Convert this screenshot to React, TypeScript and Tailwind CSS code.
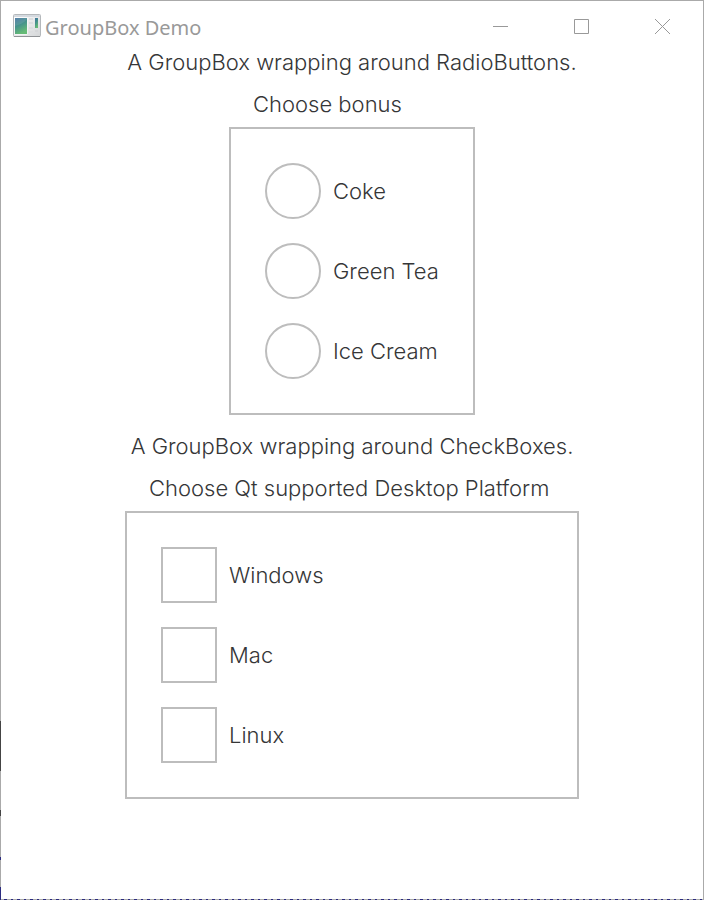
import type { ReactNode } from "react";

const beverages = ["Coke", "Green Tea", "Ice Cream"];
const platforms = ["Windows", "Mac", "Linux"];

function AppIcon() {
  return (
    <svg className="shrink-0" width="28" height="24" viewBox="0 0 28 24" aria-hidden="true">
      <defs>
        <linearGradient id="pane" x1="0" y1="0" x2="0.4" y2="1">
          <stop offset="0" stopColor="#41709f" />
          <stop offset="0.5" stopColor="#45928c" />
          <stop offset="1" stopColor="#66bb76" />
        </linearGradient>
        <linearGradient id="shell" x1="0" y1="0" x2="1" y2="1">
          <stop offset="0" stopColor="#ffffff" />
          <stop offset="1" stopColor="#d4d6d8" />
        </linearGradient>
      </defs>
      <rect x="0.5" y="0.5" width="27" height="22" rx="1" fill="url(#shell)" stroke="#b4b8bb" />
      <path d="M1 22.5h26" stroke="#909396" />
      <path d="M1 2h26" stroke="#d5dae0" strokeWidth="2" />
      <rect x="1.5" y="3.5" width="13" height="17" fill="#fff" />
      <rect x="2" y="4" width="12" height="16" fill="url(#pane)" />
      <path d="M2 12C6 11 11 9 14 5V4H2Z" fill="#fff" opacity="0.1" />
      <path d="M16 5h4M16 9h4M16 14h4M16 18h4" stroke="#dcdee0" strokeWidth="2" />
      <rect x="22" y="4" width="3" height="10" fill="url(#pane)" />
      <path d="M22 17h3" stroke="#d5d7d9" strokeWidth="2" />
    </svg>
  );
}

function WindowButton({ label, children }: { label: string; children: ReactNode }) {
  return (
    <button type="button" aria-label={label} className="flex h-[50px] w-[81px] items-center justify-center">
      <svg width="15" height="15" viewBox="0 0 15 15" fill="none" stroke="#999999" aria-hidden="true">
        {children}
      </svg>
    </button>
  );
}

function GroupBox({ title, width, children }: { title: string; width: string; children: ReactNode }) {
  return (
    <fieldset className={`mt-3.5 max-w-full ${width}`}>
      <legend className="px-6 whitespace-nowrap">{title}</legend>
      <div className="mt-[9px] flex flex-col gap-6 border-2 border-[#bdbdbd] p-[34px]">{children}</div>
    </fieldset>
  );
}

function Option({ type, name, label }: { type: "radio" | "checkbox"; name: string; label: string }) {
  const shape = type === "radio" ? "rounded-full checked:bg-[radial-gradient(#353637_50%,transparent_52%)]" : "checked:bg-[#353637] checked:bg-clip-content checked:p-3";
  return (
    <label className="flex items-center gap-3 whitespace-nowrap">
      <input type={type} name={name} className={`size-14 shrink-0 appearance-none border-2 border-[#bdbdbd] bg-white ${shape}`} />
      {label}
    </label>
  );
}

export default function App() {
  return (
    <div className="flex min-h-screen bg-[#aaaaaa] bg-[linear-gradient(to_bottom,transparent_721px,#444444_721px,#444444_771px,transparent_771px,transparent_810px,#444444_810px,#444444_816px,transparent_816px,transparent_857px,#2b2b80_857px,#2b2b80_860px,transparent_860px,transparent_887px,#2b2b80_887px),repeating-linear-gradient(to_right,#aaaaaa_0px,#aaaaaa_4px,#2b2b80_4px,#2b2b80_7px,#aaaaaa_7px,#aaaaaa_11px,#2b2b80_11px,#2b2b80_13px)] bg-[size:1px_100%,100%_1px] bg-[position:left_top,left_bottom] bg-no-repeat p-px">
      <div className="min-w-0 flex-1 bg-white font-['Inter','Liberation_Sans',sans-serif] text-[22px] leading-7 font-light text-[#353637]">
        <header className="flex h-[47px] items-start justify-between">
          <div className="flex items-start gap-1 pt-[13px] pl-3 font-['Noto_Sans','Open_Sans',sans-serif] text-[#999999]">
            <AppIcon />
            <h1 className="text-xl leading-7 font-normal">GroupBox Demo</h1>
          </div>
          <div className="flex">
            <WindowButton label="Minimize"><path d="M0 7.5h15" /></WindowButton>
            <WindowButton label="Maximize"><path d="M.5.5h14v14H.5z" /></WindowButton>
            <WindowButton label="Close"><path d="m0 0 15 15M15 0 0 15" /></WindowButton>
          </div>
        </header>
        <main className="flex flex-col items-center">
          <p>A GroupBox wrapping around RadioButtons.</p>
          <GroupBox title="Choose bonus" width="w-[246px]">
            {beverages.map((item) => <Option key={item} type="radio" name="bonus" label={item} />)}
          </GroupBox>
          <p className="mt-[17px]">A GroupBox wrapping around CheckBoxes.</p>
          <GroupBox title="Choose Qt supported Desktop Platform" width="w-[454px]">
            {platforms.map((item) => <Option key={item} type="checkbox" name="platform" label={item} />)}
          </GroupBox>
        </main>
      </div>
    </div>
  );
}
